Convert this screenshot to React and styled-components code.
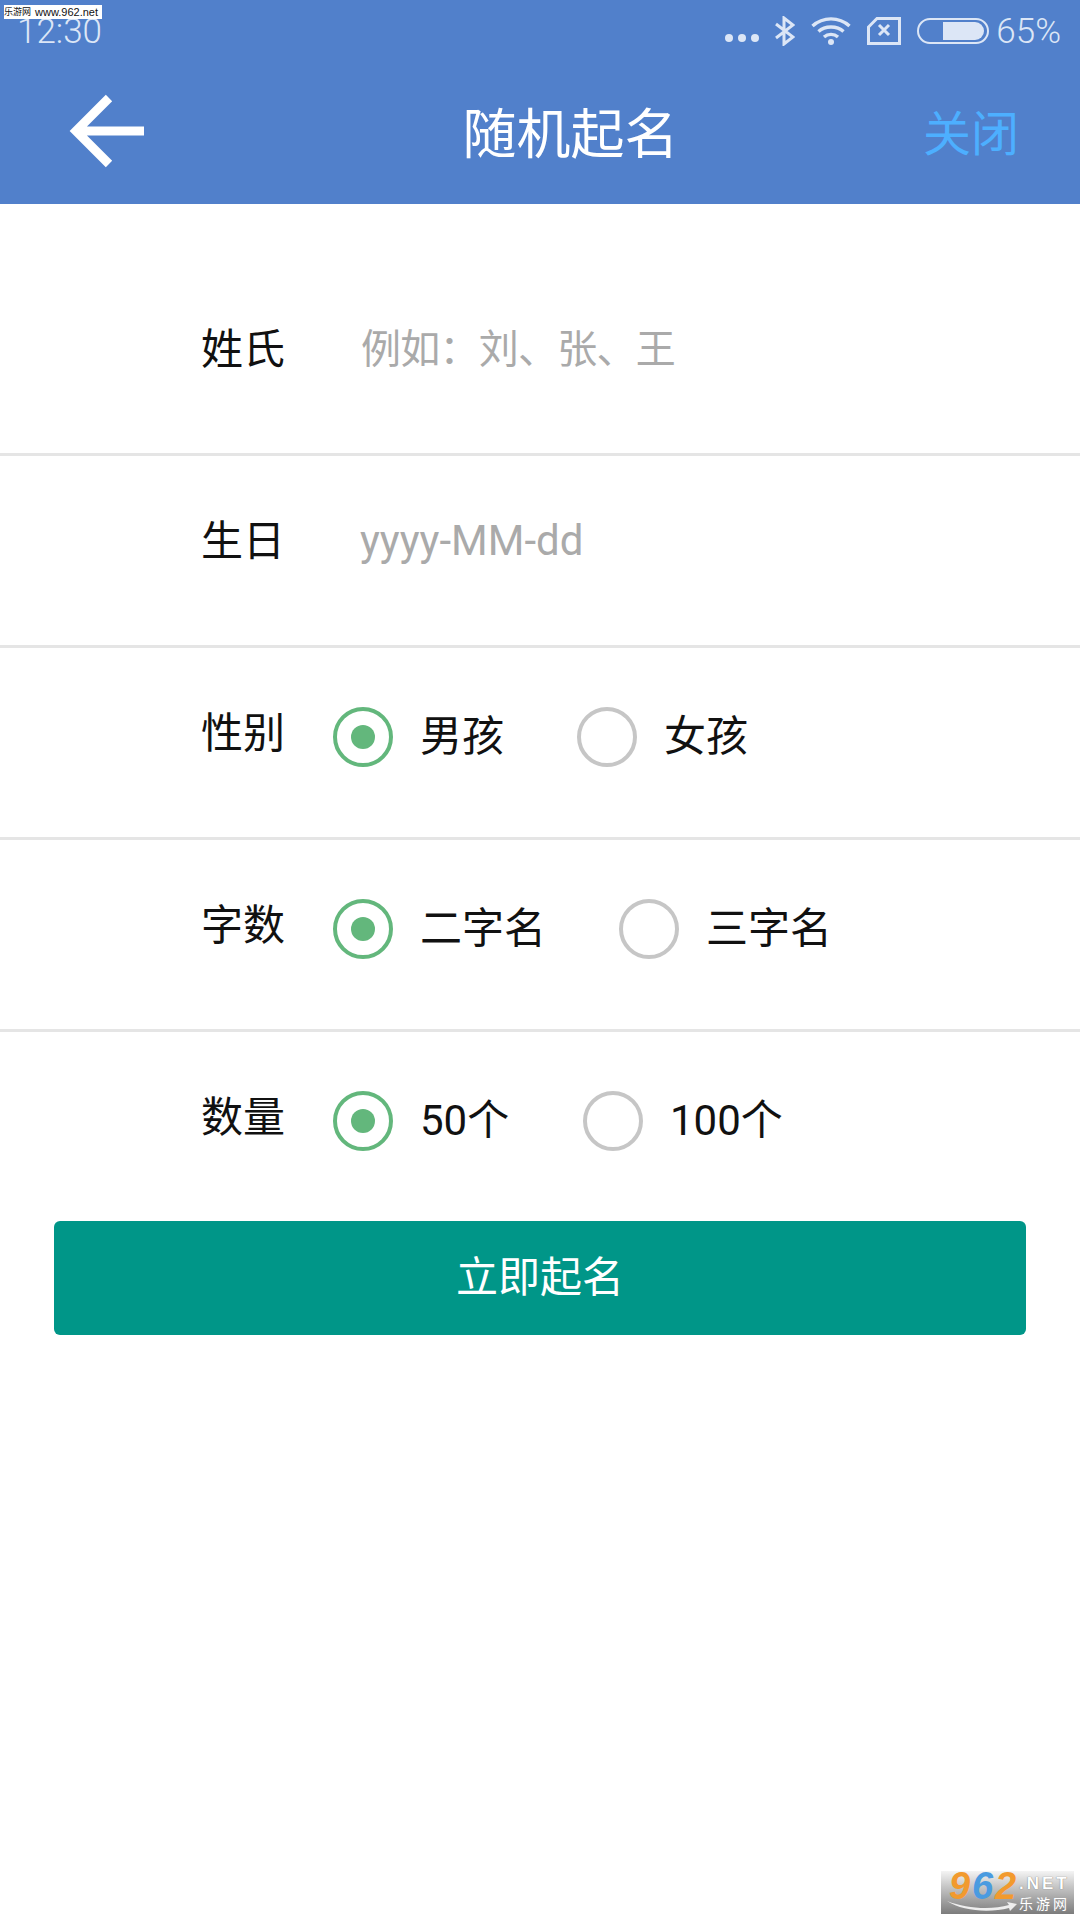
import styled, { createGlobalStyle } from "styled-components";

const GlobalStyle = createGlobalStyle`
  html, body {
    margin: 0;
    padding: 0;
    background: #fff;
  }
  body {
    font-family: Roboto, "Noto Sans CJK SC", sans-serif;
  }
`;

const Page = styled.div`
  position: relative;
  width: 1080px;
  height: 1920px;
  overflow: hidden;
  background: #fff;
`;

const Header = styled.header`
  height: 204px;
  background: #5180cb;
  display: flex;
  flex-direction: column;
`;

const StatusBar = styled.div`
  height: 62px;
  display: flex;
  align-items: center;
  justify-content: space-between;
  padding: 0 19px 0 17px;
  color: #dce6f6;
`;

const StatusText = styled.span`
  font-size: 35px;
  font-weight: 300;
  line-height: 62px;
  padding-top: 1px;
`;

const StatusIcons = styled.div`
  display: flex;
  align-items: center;
  gap: 16px;
`;

const DotsIcon = styled.svg`
  margin-top: 14px;
`;

const BatteryGroup = styled.div`
  display: flex;
  align-items: center;
  gap: 7px;
`;

const NavBar = styled.nav`
  flex: 1;
  display: flex;
  align-items: center;
  padding: 0 61px 6px 69px;
  color: #fff;
`;

const BackIcon = styled.svg`
  flex-shrink: 0;
  margin-top: 2px;
`;

const Title = styled.h1`
  flex: 1;
  margin: 0;
  padding-left: 74px;
  text-align: center;
  font-size: 54px;
  font-weight: 400;
`;

const Close = styled.span`
  font-size: 48px;
  color: #4dafff;
`;

const Form = styled.main`
  padding-top: 60px;
`;

const Row = styled.div`
  height: 192px;
  box-sizing: border-box;
  padding: 58px 0 0 201px;
  display: flex;
  align-items: flex-start;
  border-bottom: ${(p) => (p.$last ? "none" : "3px solid #e5e5e5")};
`;

const Label = styled.span`
  width: 132px;
  flex-shrink: 0;
  font-size: 42px;
  line-height: 56px;
  color: #111;
`;

const TextInput = styled.span`
  margin: ${(p) => p.$top || 0}px 0 0 ${(p) => p.$offset}px;
  font-size: ${(p) => p.$size}px;
  letter-spacing: ${(p) => p.$spacing || 0}px;
  line-height: 56px;
  color: #aaa;
`;

const Option = styled.div`
  display: flex;
  align-items: center;
  gap: 27px;
  width: ${(p) => p.$width}px;
  margin-top: 1px;
`;

const Radio = styled.span`
  width: 60px;
  height: 60px;
  box-sizing: border-box;
  border-radius: 50%;
  border: 4px solid ${(p) => (p.$on ? "#63b77c" : "#c6c6c6")};
  display: flex;
  align-items: center;
  justify-content: center;

  &::after {
    content: "";
    display: ${(p) => (p.$on ? "block" : "none")};
    width: 24px;
    height: 24px;
    border-radius: 50%;
    background: #63b77c;
  }
`;

const OptionText = styled.span`
  font-size: 42px;
  line-height: 60px;
  color: #111;
`;

const Submit = styled.button`
  display: block;
  width: 972px;
  height: 114px;
  margin: -3px 0 0 54px;
  padding: 0 0 10px;
  border: none;
  border-radius: 6px;
  background: #009688;
  color: #fff;
  font-family: inherit;
  font-size: 42px;
`;

const Watermark = styled.div`
  position: absolute;
  left: 4px;
  top: 5px;
  width: 98px;
  height: 14px;
  display: flex;
  gap: 4px;
  background: #fff;
  color: #111;
  font: 11px/14px "Liberation Sans", sans-serif;
  white-space: nowrap;
`;

const WatermarkCn = styled.span`
  font: 9px/14px "Noto Sans CJK SC", sans-serif;
`;

const Logo = styled.div`
  position: absolute;
  left: 941px;
  top: 1871px;
  width: 133px;
  height: 43px;
  overflow: hidden;
  background: linear-gradient(#f4f4f4, #c8c8c8 35%, #7c7c7c);
`;

const LogoNum = styled.span`
  position: absolute;
  left: ${(p) => p.$left}px;
  top: 0;
  font: italic 700 38px/30px "Liberation Sans", sans-serif;
  color: ${(p) => p.$color};
`;

const LogoNet = styled.span`
  position: absolute;
  left: 78px;
  top: 5px;
  font: 700 17px/16px "Liberation Sans", sans-serif;
  letter-spacing: 3px;
  color: #fff;
  text-shadow: 0 0 1px #555;
`;

const LogoCn = styled.span`
  position: absolute;
  left: 78px;
  top: 22px;
  font: 400 14px/20px "Noto Sans CJK SC", sans-serif;
  letter-spacing: 3px;
  color: #fff;
`;

const LogoSwoosh = styled.svg`
  position: absolute;
  left: 6px;
  top: 30px;
`;

function Dots() {
  return (
    <DotsIcon width="34" height="10" viewBox="0 0 34 10" fill="#dce6f6">
      <circle cx="4" cy="5" r="4" />
      <circle cx="17" cy="5" r="4" />
      <circle cx="30" cy="5" r="4" />
    </DotsIcon>
  );
}

function Bluetooth() {
  return (
    <svg width="20" height="30" viewBox="0 0 20 30" fill="none" stroke="#dce6f6" strokeWidth="3">
      <path d="M1 8 L18 21 L9 28 V2 L18 9 L1 22" />
    </svg>
  );
}

function Wifi() {
  return (
    <svg width="40" height="28" viewBox="0 0 40 28" fill="none" stroke="#dce6f6" strokeWidth="3.4">
      <path d="M1.5 9 C12 -0.5 28 -0.5 38.5 9" />
      <path d="M7.5 14.5 C14 8.5 26 8.5 32.5 14.5" />
      <path d="M13 20 C17 16.5 23 16.5 27 20" />
      <circle cx="20" cy="25" r="3" fill="#dce6f6" stroke="none" />
    </svg>
  );
}

function Sim() {
  return (
    <svg width="34" height="28" viewBox="0 0 34 28" fill="none" stroke="#dce6f6" strokeWidth="3">
      <path d="M10 1.5 H32.5 V26.5 H1.5 V10 Z" />
      <path d="M12 8 L22 18 M22 8 L12 18" strokeWidth="3" />
    </svg>
  );
}

function Battery() {
  return (
    <svg width="72" height="26" viewBox="0 0 72 26" fill="none">
      <rect x="1" y="1" width="70" height="24" rx="12" stroke="#dce6f6" strokeWidth="2" />
      <path d="M26 4 H58 A9 9 0 0 1 58 22 H26 Z" fill="#dce6f6" />
    </svg>
  );
}

function BackArrow() {
  return (
    <BackIcon width="75" height="74" viewBox="0 0 75 74" fill="none" stroke="#fff" strokeWidth="9">
      <path d="M75 37 H7 M40 4 L7 37 L40 70" />
    </BackIcon>
  );
}

function RadioOption({ on, width, children }) {
  return (
    <Option $width={width}>
      <Radio $on={on} />
      <OptionText>{children}</OptionText>
    </Option>
  );
}

export default function App() {
  return (
    <Page>
      <GlobalStyle />
      <Header>
        <StatusBar>
          <StatusText>12:30</StatusText>
          <StatusIcons>
            <Dots />
            <Bluetooth />
            <Wifi />
            <Sim />
            <BatteryGroup>
              <Battery />
              <StatusText>65%</StatusText>
            </BatteryGroup>
          </StatusIcons>
        </StatusBar>
        <NavBar>
          <BackArrow />
          <Title>随机起名</Title>
          <Close>关闭</Close>
        </NavBar>
      </Header>
      <Form>
        <Row>
          <Label>姓氏</Label>
          <TextInput $offset={28} $size={40} $spacing={-0.75}>例如：刘、张、王</TextInput>
        </Row>
        <Row>
          <Label>生日</Label>
          <TextInput $offset={27} $size={42} $top={-1}>yyyy-MM-dd</TextInput>
        </Row>
        <Row>
          <Label>性别</Label>
          <RadioOption on width={244}>男孩</RadioOption>
          <RadioOption>女孩</RadioOption>
        </Row>
        <Row>
          <Label>字数</Label>
          <RadioOption on width={286}>二字名</RadioOption>
          <RadioOption>三字名</RadioOption>
        </Row>
        <Row $last>
          <Label>数量</Label>
          <RadioOption on width={250}>50个</RadioOption>
          <RadioOption>100个</RadioOption>
        </Row>
        <Submit>立即起名</Submit>
      </Form>
      <Watermark>
        <WatermarkCn>乐游网</WatermarkCn>
        <span>www.962.net</span>
      </Watermark>
      <Logo>
        <LogoNum $left={8} $color="#f29a2e">9</LogoNum>
        <LogoNum $left={31} $color="#4a9be0">6</LogoNum>
        <LogoNum $left={54} $color="#f29a2e">2</LogoNum>
        <LogoNet>.NET</LogoNet>
        <LogoSwoosh width="70" height="12" viewBox="0 0 70 12" fill="#eee">
          <path d="M0 0 C20 8 45 9 62 4 L60 1 L70 3 L63 10 L62 7 C42 12 15 10 0 0 Z" />
        </LogoSwoosh>
        <LogoCn>乐游网</LogoCn>
      </Logo>
    </Page>
  );
}
